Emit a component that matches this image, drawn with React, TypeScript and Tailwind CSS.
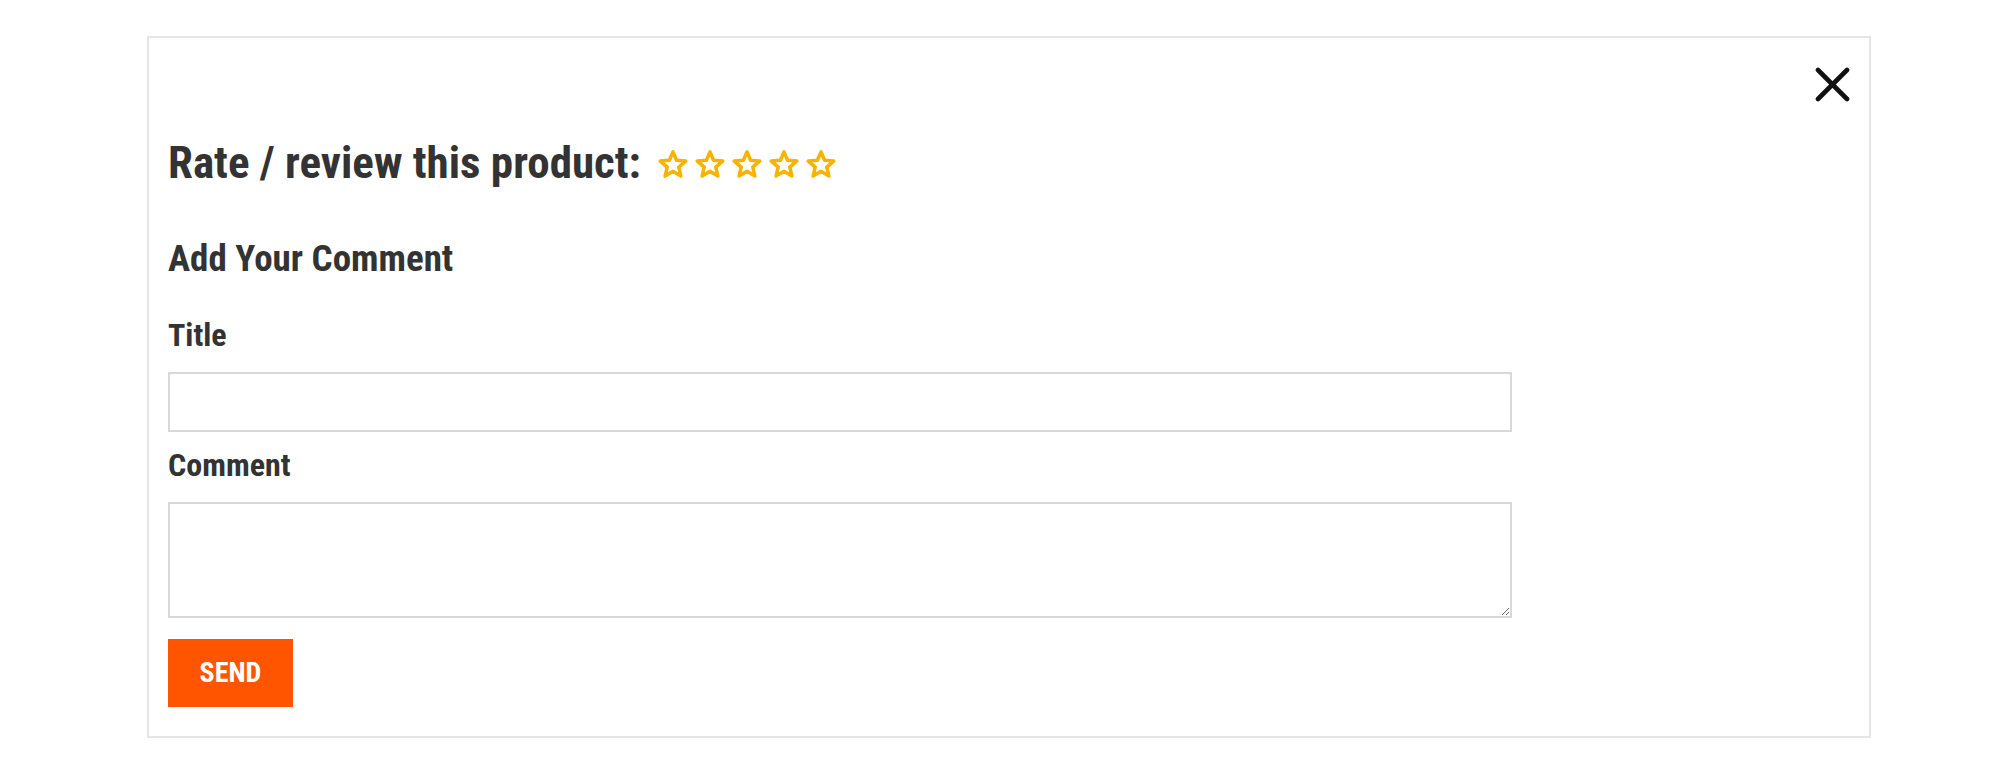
import React from "react";

const font = { fontFamily: '"Roboto Condensed", Roboto, "Liberation Sans", sans-serif' };

function Star() {
  return (
    <svg width="30" height="28" viewBox="0 0 24 23" className="block">
      <polygon
        points="12,1.5 14.94,8.45 22.46,9.1 16.76,14.05 18.47,21.4 12,17.5 5.53,21.4 7.24,14.05 1.54,9.1 9.06,8.45"
        fill="none"
        stroke="#f6b400"
        strokeWidth="2.9"
        strokeLinejoin="round"
      />
    </svg>
  );
}

export default function App() {
  return (
    <div className="min-h-[778px] w-[2000px] bg-white pt-[36px] pl-[147px]" style={font}>
      <div className="box-border flex h-[702px] w-[1724px] flex-col border-2 border-[#e6e6e6] bg-white px-[19px] pt-[29px] pb-[29px] text-[#333333]">
        <div className="flex justify-end">
          <button className="block h-[35px] w-[35px]" aria-label="Close">
            <svg width="35" height="35" viewBox="0 0 35 35">
              <line x1="3" y1="3" x2="32" y2="32" stroke="#111" strokeWidth="4.6" strokeLinecap="round" />
              <line x1="32" y1="3" x2="3" y2="32" stroke="#111" strokeWidth="4.6" strokeLinecap="round" />
            </svg>
          </button>
        </div>
        <div className="mt-[38px] flex h-[45px] items-center">
          <h2 className="text-[45px] font-bold leading-[45px]">Rate / review this product:</h2>
          <div className="ml-[17px] flex items-center gap-[7px] pt-[2px]">
            <Star />
            <Star />
            <Star />
            <Star />
            <Star />
          </div>
        </div>
        <h3 className="mt-[55px] text-[37px] font-bold leading-[37px]">Add Your Comment</h3>
        <label className="mt-[42px] block text-[32px] font-bold leading-[32px]">Title</label>
        <input
          type="text"
          className="mt-[21px] box-border block h-[60px] w-[1344px] border-2 border-[#d8d8d8] bg-white outline-none"
        />
        <label className="mt-[17px] block text-[32px] font-bold leading-[32px]">Comment</label>
        <textarea className="mt-[21px] box-border block h-[116px] w-[1344px] border-2 border-[#d8d8d8] bg-white outline-none" />
        <button className="mt-[21px] flex h-[68px] w-[125px] items-center justify-center bg-[#ff5500] text-[28px] font-bold uppercase leading-none text-white">
          Send
        </button>
      </div>
    </div>
  );
}
